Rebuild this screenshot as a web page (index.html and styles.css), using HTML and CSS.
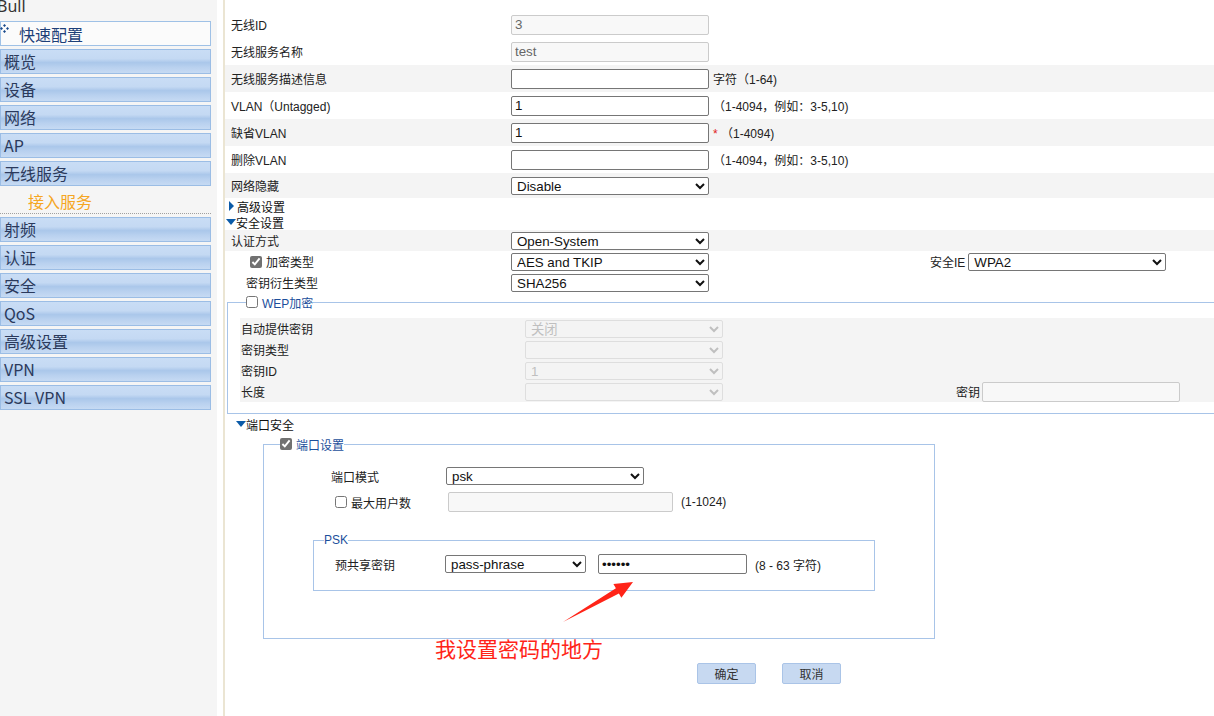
FILE: index.html
```html
<!DOCTYPE html>
<html lang="zh-CN">
<head>
    <meta charset="UTF-8">
    <title>无线服务 - 接入服务</title>
    <link rel="stylesheet" href="styles.css">
</head>
<body>
    <div class="sidebar">
        <div class="brand">Bull</div>
        <div class="quick">
            <svg class="quick-icon" width="9" height="9" viewBox="0 0 9 9">
                <path d="M4.5 0L6 1.5 4.5 3 3 1.5z M1.5 3L3 4.5 1.5 6 0 4.5z M7.5 3L9 4.5 7.5 6 6 4.5z M4.5 6L6 7.5 4.5 9 3 7.5z" fill="#1a4a8c"/>
            </svg>
            <span>快速配置</span>
        </div>
        <div class="menu">概览</div>
        <div class="menu">设备</div>
        <div class="menu">网络</div>
        <div class="menu">AP</div>
        <div class="menu">无线服务</div>
        <div class="submenu">接入服务</div>
        <div class="menu">射频</div>
        <div class="menu">认证</div>
        <div class="menu">安全</div>
        <div class="menu">QoS</div>
        <div class="menu">高级设置</div>
        <div class="menu">VPN</div>
        <div class="menu">SSL VPN</div>
    </div>

    <div class="main">
        <!-- basic settings -->
        <div class="row">
            <span class="lbl">无线ID</span>
            <input class="field" type="text" value="3" disabled>
        </div>
        <div class="row">
            <span class="lbl">无线服务名称</span>
            <input class="field" type="text" value="test" disabled>
        </div>
        <div class="row alt">
            <span class="lbl">无线服务描述信息</span>
            <input class="field" type="text" value="">
            <span class="hint">字符（1-64)</span>
        </div>
        <div class="row">
            <span class="lbl">VLAN（Untagged)</span>
            <input class="field" type="text" value="1">
            <span class="hint">（1-4094，例如：3-5,10)</span>
        </div>
        <div class="row alt">
            <span class="lbl">缺省VLAN</span>
            <input class="field" type="text" value="1">
            <span class="hint"><span class="req">*</span> （1-4094)</span>
        </div>
        <div class="row">
            <span class="lbl">删除VLAN</span>
            <input class="field" type="text" value="">
            <span class="hint">（1-4094，例如：3-5,10)</span>
        </div>
        <div class="row alt short">
            <span class="lbl">网络隐藏</span>
            <select class="field sel">
                <option>Disable</option>
                <option>Enable</option>
            </select>
        </div>

        <div class="toggle">
            <span class="tri-right"></span>高级设置
        </div>
        <div class="toggle">
            <span class="tri-down"></span>安全设置
        </div>

        <!-- security -->
        <div class="row alt sm">
            <span class="lbl">认证方式</span>
            <select class="field sel">
                <option>Open-System</option>
                <option>Shared-Key</option>
            </select>
        </div>
        <div class="row sm">
            <span class="lbl lbl-check"><input type="checkbox" class="chk" checked>加密类型</span>
            <select class="field sel">
                <option>AES and TKIP</option>
                <option>AES</option>
                <option>TKIP</option>
            </select>
            <span class="ie-label">安全IE</span>
            <select class="field sel">
                <option>WPA2</option>
                <option>WPA</option>
            </select>
        </div>
        <div class="row sm">
            <span class="lbl lbl-indent">密钥衍生类型</span>
            <select class="field sel">
                <option>SHA256</option>
                <option>SHA1</option>
            </select>
        </div>

        <fieldset class="wep">
            <legend class="legend"><input type="checkbox" class="chk">WEP加密</legend>
            <div class="wep-body">
                <div class="wep-row">
                    <span class="wep-lbl">自动提供密钥</span>
                    <select class="field sel" disabled><option>关闭</option></select>
                </div>
                <div class="wep-row">
                    <span class="wep-lbl">密钥类型</span>
                    <select class="field sel" disabled><option></option></select>
                </div>
                <div class="wep-row">
                    <span class="wep-lbl">密钥ID</span>
                    <select class="field sel" disabled><option>1</option></select>
                </div>
                <div class="wep-row">
                    <span class="wep-lbl">长度</span>
                    <select class="field sel" disabled><option></option></select>
                    <span class="key-label">密钥</span>
                    <input class="field" type="text" disabled>
                </div>
            </div>
        </fieldset>

        <!-- port security -->
        <div class="toggle port-toggle">
            <span class="tri-down"></span>端口安全
        </div>

        <fieldset class="port">
            <legend class="legend port-legend"><input type="checkbox" class="chk" checked>端口设置</legend>
            <div class="port-row">
                <span class="port-lbl">端口模式</span>
                <select class="field sel">
                    <option>psk</option>
                    <option>mac</option>
                </select>
            </div>
            <div class="users-row">
                <input type="checkbox" class="chk">
                <span class="users-lbl">最大用户数</span>
                <input class="field users-field" type="text" disabled>
                <span class="hint users-hint">(1-1024)</span>
            </div>

            <fieldset class="psk">
                <legend class="legend psk-legend">PSK</legend>
                <div class="psk-row">
                    <span class="psk-lbl">预共享密钥</span>
                    <select class="field sel psk-sel">
                        <option>pass-phrase</option>
                        <option>raw-key</option>
                    </select>
                    <input class="field psk-pass" type="password" value="123456">
                    <span class="hint psk-hint">(8 - 63 字符)</span>
                </div>
            </fieldset>
        </fieldset>

        <div class="actions">
            <button class="btn">确定</button>
            <button class="btn">取消</button>
        </div>

        <!-- annotation -->
        <svg class="arrow" width="80" height="48" viewBox="0 0 80 48">
            <polygon points="3,44 55.9,10.3 53.4,6 73,4 61.4,19.8 58.9,15.5" fill="#ff2418"/>
        </svg>
        <div class="note">我设置密码的地方</div>
    </div>
</body>
</html>
```

FILE: styles.css
```css
body {
    margin: 0;
    display: flex;
    min-height: 100vh;
    background: #fff;
    font-family: "Liberation Sans", "Noto Sans CJK SC", sans-serif;
    font-size: 12px;
    color: #222;
}

/* sidebar */
.sidebar {
    width: 217px;
    flex-shrink: 0;
    background: #f5f5f5;
    font-family: "Noto Sans CJK SC", "Noto Sans", sans-serif;
    font-size: 16px;
    color: #2b3a5c;
}

.brand {
    height: 21px;
    overflow: hidden;
    font-family: "Noto Sans", sans-serif;
    font-size: 16px;
    line-height: 16px;
    margin-top: -2px;
    margin-left: -3px;
    color: #333;
}

.quick {
    width: 211px;
    height: 25px;
    box-sizing: border-box;
    margin-top: 2px;
    border: 1px solid #9fc1e6;
    background: #fbfbfb;
    display: flex;
    align-items: flex-start;
    color: #1d3f78;
}

.quick-icon {
    margin-top: 2px;
    margin-left: -1px;
    flex-shrink: 0;
}

.quick span {
    margin-left: 10px;
    line-height: 25px;
}

.menu {
    width: 211px;
    height: 25px;
    box-sizing: border-box;
    margin-top: 3px;
    padding-left: 3px;
    border: 1px solid #9bbde5;
    line-height: 23px;
    background: linear-gradient(to bottom, #c9ddf5 0%, #c4d9f3 38%, #aac7ea 55%, #b9d1ef 75%, #c6daf3 100%);
}

.submenu {
    width: 211px;
    height: 25px;
    box-sizing: border-box;
    margin-top: 3px;
    padding-left: 28px;
    line-height: 24px;
    color: #f5a623;
    border-bottom: 1px dotted #a0a0a0;
}

/* main form */
.main {
    flex: 1;
    margin-left: 6px;
    border-left: 2px solid #ebe5d3;
    position: relative;
    overflow: hidden;
    padding-top: 11px;
}

.row {
    display: flex;
    align-items: center;
    height: 27px;
    padding-left: 6px;
}

.row.alt {
    background: #f4f4f4;
}

.row.short {
    height: 25px;
}

.row.sm {
    height: 21px;
}

.lbl {
    width: 280px;
    flex-shrink: 0;
}

.lbl-check {
    display: flex;
    align-items: center;
    box-sizing: border-box;
    padding-left: 19px;
}

.lbl-indent {
    box-sizing: border-box;
    padding-left: 15px;
}

.field {
    width: 198px;
    height: 20px;
    box-sizing: border-box;
    margin: 0;
    padding: 0 3px;
    border: 1px solid #767676;
    border-radius: 2px;
    background: #fff;
    font-family: "Liberation Sans", "Noto Sans CJK SC", sans-serif;
    font-size: 13.333px;
    color: #111;
}

.field:disabled {
    background: #f8f8f8;
    border-color: #cbcbcb;
    color: #666;
}

.sel {
    height: 18px;
    padding: 0 1px;
}

.sel:disabled {
    background: #f4f4f4;
    border-color: #d6d6d6;
    color: #aaa;
}

.hint {
    margin-left: 4px;
    color: #222;
}

.req {
    color: #e02020;
}

.chk {
    width: 12px;
    height: 12px;
    margin: 0 4px 0 0;
    accent-color: #717171;
}

.ie-label {
    margin-left: 221px;
    margin-right: 3px;
}

.toggle {
    display: flex;
    align-items: center;
    height: 16px;
    color: #111;
}

.tri-right {
    width: 0;
    height: 0;
    margin: 0 3px 0 4px;
    border-left: 5px solid #0b5ba8;
    border-top: 5.5px solid transparent;
    border-bottom: 5.5px solid transparent;
}

.tri-down {
    width: 0;
    height: 0;
    margin-left: 1px;
    border-top: 6px solid #0b5ba8;
    border-left: 5.5px solid transparent;
    border-right: 5.5px solid transparent;
}

/* fieldsets */
fieldset {
    margin: 0;
    padding: 0;
    min-width: 0;
    border: 1px solid #a8c4e8;
}

.legend {
    display: flex;
    align-items: center;
    height: 14px;
    padding: 0;
    color: #1c4f9c;
}

.wep {
    margin: 2px -20px 0 2px;
}

.wep .legend {
    margin-left: 18px;
}

.wep-body {
    margin: 9px 0 11px 12px;
    background: #f4f4f4;
}

.wep-row {
    display: flex;
    align-items: center;
    height: 21px;
}

.wep-lbl {
    width: 284px;
    padding-left: 1px;
    flex-shrink: 0;
}

.key-label {
    margin-left: 233px;
    margin-right: 2px;
}

.port-toggle {
    margin-top: 2px;
    padding-left: 10px;
}

.port {
    width: 672px;
    box-sizing: border-box;
    margin: 5px 0 0 38px;
}

.port-legend {
    margin-left: 16px;
}

.port-row {
    display: flex;
    align-items: center;
    margin-top: 16px;
    padding-left: 67px;
}

.port-lbl {
    width: 115px;
    flex-shrink: 0;
}

.users-row {
    display: flex;
    align-items: center;
    margin-top: 7px;
    padding-left: 71px;
}

.users-lbl {
    width: 97px;
    flex-shrink: 0;
}

.users-field {
    width: 225px;
    background: #f5f5f5;
}

.users-hint {
    margin-left: 8px;
}

.psk {
    width: 562px;
    box-sizing: border-box;
    margin: 21px 0 47px 49px;
    padding-bottom: 16px;
}

.psk-legend {
    margin-left: 10px;
}

.psk-row {
    display: flex;
    align-items: center;
    margin-top: 7px;
    padding-left: 21px;
}

.psk-lbl {
    width: 110px;
    flex-shrink: 0;
}

.psk-sel {
    width: 141px;
}

.psk-pass {
    width: 149px;
    margin-left: 12px;
}

.psk-hint {
    margin-left: 8px;
}

.actions {
    display: flex;
    gap: 26px;
    margin-top: 24px;
    padding-left: 472px;
}

.btn {
    width: 59px;
    height: 21px;
    padding: 0;
    border: 1px solid #aac4e7;
    border-radius: 2px;
    background: #c7d9f1;
    font-family: "Noto Sans CJK SC", sans-serif;
    font-size: 12px;
    color: #333;
    cursor: pointer;
}

/* red annotation over the form */
.arrow {
    position: absolute;
    left: 335px;
    top: 578px;
}

.note {
    position: absolute;
    left: 210px;
    top: 636px;
    font-family: "Noto Sans CJK SC", sans-serif;
    font-size: 21px;
    line-height: 24px;
    color: #ff2418;
}
```
